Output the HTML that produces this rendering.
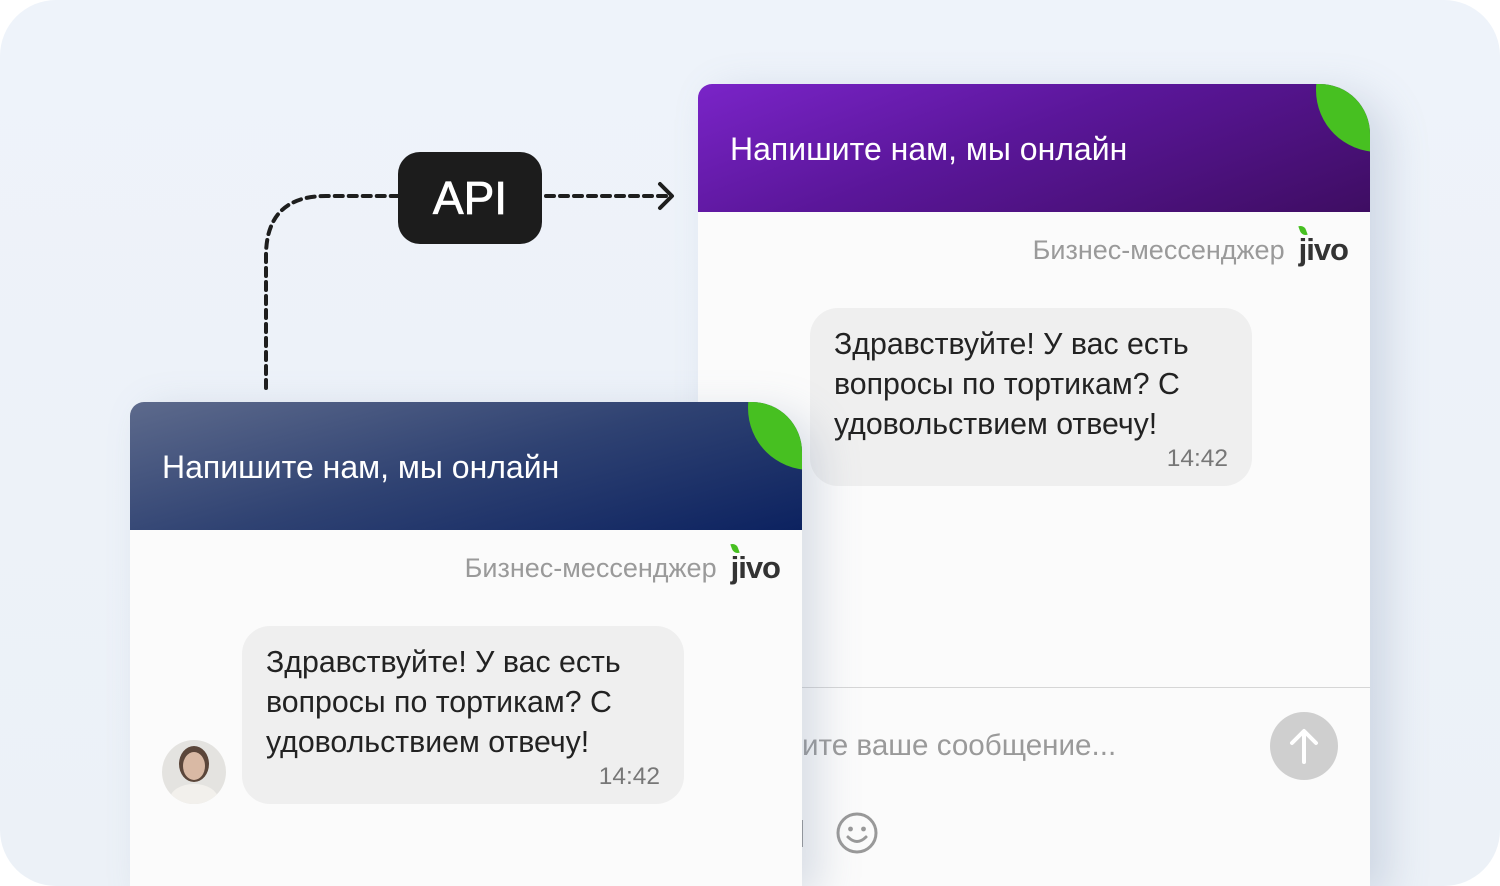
<!DOCTYPE html>
<html><head><meta charset="utf-8"><style>
*{margin:0;padding:0;box-sizing:border-box}
html,body{width:1500px;height:886px;overflow:hidden;background:#fff}
body{font-family:"Liberation Sans",Arial,sans-serif;position:relative}
.bg{position:absolute;left:0;top:0;width:1500px;height:886px;border-radius:56px;background:linear-gradient(180deg,#eef3fa,#ecf1f7);overflow:hidden}
.panel{position:absolute;width:672px;background:#fbfbfb;overflow:hidden;border-radius:14px 50px 0 0;box-shadow:18px 10px 40px rgba(120,140,170,.25)}
.hdr{position:relative;height:128px;overflow:hidden}
.hdr .t{position:absolute;left:32px;top:47px;color:#fff;font-size:32px}
.leaf{position:absolute;width:124px;height:124px;border-radius:50%;background:#47c021;left:618px;top:-56px}
.brand{position:absolute;right:22px;top:22px;font-size:27px;color:#9a9a9a;display:flex;align-items:center}
.jivo{margin-left:14px;font-size:31px;font-weight:bold;color:#333;position:relative;letter-spacing:-1px}
.jivo i{position:absolute;left:1px;top:-7px;width:6px;height:11px;background:#47c021;border-radius:0 6px 0 6px;transform:rotate(-20deg)}
.bubble{position:absolute;width:442px;height:178px;border-radius:28px;background:#efefef;padding:17px 20px 16px 24px;font-size:30.3px;line-height:40px;color:#222}
.bubble .tm{position:absolute;right:24px;bottom:14px;font-size:24.5px;color:#777;line-height:26px}
</style></head><body>
<div class="bg">
<svg width="1500" height="886" style="position:absolute;left:0;top:0">
<path d="M266 388 V256 Q266 196 326 196 H398" fill="none" stroke="#1e1e1e" stroke-width="4" stroke-dasharray="8 6" stroke-linecap="round"/>
<path d="M546 196 H668" fill="none" stroke="#1e1e1e" stroke-width="4" stroke-dasharray="8 6" stroke-linecap="round"/>
<path d="M660 184 L672 196 L660 208" fill="none" stroke="#1e1e1e" stroke-width="4" stroke-linecap="round" stroke-linejoin="round"/>
</svg>
<div style="position:absolute;left:398px;top:152px;width:144px;height:92px;border-radius:22px;background:#1c1c1c;color:#fff;font-size:46px;text-align:center;line-height:92px;-webkit-text-stroke:0.8px #fff">API</div>

<div class="panel" style="left:698px;top:84px;height:802px">
 <div class="hdr" style="background:linear-gradient(160deg,#7a24c8 0%,#5a1699 45%,#3e0d62 100%)"><div class="t">Напишите нам, мы онлайн</div><div class="leaf"></div></div>
 <div class="brand" style="top:148px">Бизнес-мессенджер <span class="jivo"><i></i>jivo</span></div>
 <div class="bubble" style="left:112px;top:224px">Здравствуйте! У вас есть вопросы по тортикам? С удовольствием отвечу!<div class="tm">14:42</div></div>
 <div style="position:absolute;left:0;top:603px;width:672px;height:1px;background:#d6d6d6"></div>
 <div style="position:absolute;left:104px;top:645px;font-size:29.6px;color:#9a9a9a;white-space:nowrap">ите ваше сообщение...</div>
 <div style="position:absolute;left:572px;top:628px;width:68px;height:68px;border-radius:50%;background:#cfcfcf"></div>
 <svg style="position:absolute;left:572px;top:628px" width="68" height="68"><path d="M34 50 V20 M22 31 L34 19 L46 31" fill="none" stroke="#fff" stroke-width="4" stroke-linecap="round" stroke-linejoin="round"/></svg>
 <svg style="position:absolute;left:136px;top:726px" width="46" height="46"><circle cx="23" cy="23" r="19" fill="none" stroke="#999" stroke-width="3"/><circle cx="16.5" cy="19" r="2.4" fill="#999"/><circle cx="29.5" cy="19" r="2.4" fill="#999"/><path d="M14 27 Q23 36 32 27" fill="none" stroke="#999" stroke-width="3" stroke-linecap="round"/></svg>
 <div style="position:absolute;left:102px;top:736px;width:3px;height:27px;background:#999"></div>
</div>

<div class="panel" style="left:130px;top:402px;height:484px;border-radius:14px 50px 0 0">
 <div class="hdr" style="background:linear-gradient(165deg,#5d6a8c 0%,#2f4272 50%,#0c2260 100%)"><div class="t">Напишите нам, мы онлайн</div><div class="leaf"></div></div>
 <div class="brand" style="top:148px">Бизнес-мессенджер <span class="jivo"><i></i>jivo</span></div>
 <div class="bubble" style="left:112px;top:224px">Здравствуйте! У вас есть вопросы по тортикам? С удовольствием отвечу!<div class="tm">14:42</div></div>
 <div style="position:absolute;left:32px;top:338px;width:64px;height:64px;border-radius:50%;overflow:hidden;background:#e4e3e0">
  <div style="position:absolute;left:17px;top:6px;width:30px;height:36px;border-radius:50%;background:#5b463a"></div>
  <div style="position:absolute;left:21px;top:12px;width:22px;height:28px;border-radius:50%;background:#d9b9a4"></div>
  <div style="position:absolute;left:8px;top:44px;width:48px;height:30px;border-radius:50%;background:#f2f0ec"></div>
 </div>
</div>
</div>
</body></html>
